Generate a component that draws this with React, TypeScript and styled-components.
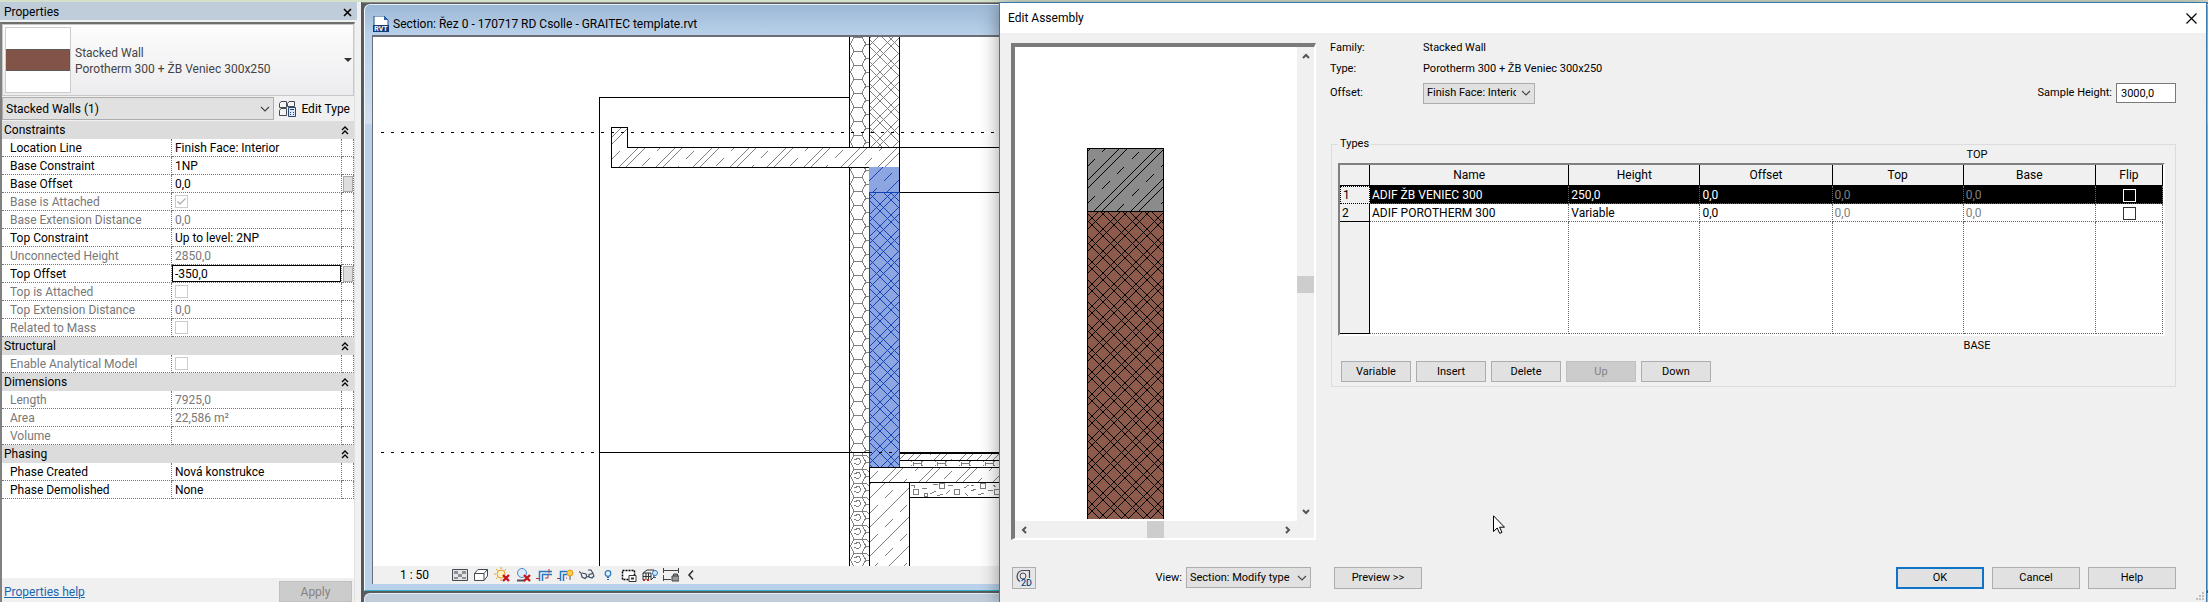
import React, { useId } from "react";
import styled, { createGlobalStyle } from "styled-components";

const Global = createGlobalStyle`
  *, *::before, *::after { box-sizing: border-box; }
  html, body { margin: 0; padding: 0; }
  body { font: 12px/18px Roboto, "Liberation Sans", sans-serif; color: #000; background: #f0f0f0; }
  button, input, select { font: inherit; color: inherit; margin: 0; }
  table { border-collapse: separate; border-spacing: 0; table-layout: fixed; }
  th, td { padding: 0; font-weight: 400; text-align: left; }
  svg { display: block; flex: none; }
`;

/* ---------- shared controls ---------- */

const Desktop = styled.div`
  position: relative;
  display: flex;
  min-height: 100vh;
  padding-top: 2px;
  background: #d6e1cc;
`;

const PushButton = styled.button<{ $wide?: boolean; $primary?: boolean }>`
  width: ${(p) => (p.$wide ? 88 : 70)}px;
  height: ${(p) => (p.$wide ? 22 : 21)}px;
  padding: 0;
  border: ${(p) => (p.$primary ? "2px solid #0f74c8" : "1px solid #adadad")};
  background: #e1e1e1;
  font-size: 11px;
  line-height: 16px;
  text-align: center;
  &:disabled { background: #cccccc; border-color: #bfbfbf; color: #838383; }
`;

const SelectBox = styled.div<{ $width?: number; $height: number; $size: number }>`
  position: relative;
  ${(p) => (p.$width ? `width: ${p.$width}px;` : "flex: 1;")}
  height: ${(p) => p.$height}px;
  font-size: ${(p) => p.$size}px;
  select {
    appearance: none;
    width: 100%;
    height: 100%;
    padding: 0 18px 0 3px;
    border: 1px solid #adadad;
    border-radius: 0;
    background: #e1e1e1;
    overflow: hidden;
  }
  svg { position: absolute; right: 4px; top: 50%; margin-top: -4px; pointer-events: none; }
`;

const Tick = styled.input`
  appearance: none;
  display: block;
  width: 13px;
  height: 13px;
  border: 1px solid #333;
  background: #fff;
  &:disabled { border-color: #cccccc; }
  &:checked {
    background: #fff url("data:image/svg+xml,%3Csvg xmlns='http://www.w3.org/2000/svg' viewBox='0 0 11 11'%3E%3Cpath d='M1.500 5.500 4 8 9.500 2.500' fill='none' stroke='%23b0b0b0' stroke-width='1.300'/%3E%3C/svg%3E");
  }
`;

const Chevron = () => (
  <svg width="10" height="8" viewBox="0 0 10 8" fill="none" stroke="#444" strokeWidth="1.1">
    <path d="M1 2 5 6 9 2" />
  </svg>
);

type Option = { id: string; label?: string; text: string; width?: number; height: number; size: number };
const Select = ({ id, label, text, width, height, size }: Option) => (
  <SelectBox $width={width} $height={height} $size={size}>
    <select id={id} aria-label={label} defaultValue={text}>
      <option>{text}</option>
    </select>
    <Chevron />
  </SelectBox>
);

/* ---------- properties palette ---------- */

const Palette = styled.aside`
  display: flex;
  flex-direction: column;
  flex: none;
  width: 361px;
  padding-right: 4px;
  background: #f0f0f0;
`;

const PaletteTitle = styled.header`
  display: flex;
  align-items: center;
  justify-content: space-between;
  height: 18px;
  padding: 2px 5px 0 4px;
  background: #bfcddb;
  h2 { margin: 0; font-size: 12px; line-height: 18px; font-weight: 400; }
`;

const IconButton = styled.button`
  display: flex;
  align-items: center;
  justify-content: center;
  padding: 0;
  border: 0;
  background: none;
`;

const PaletteBody = styled.div`
  display: flex;
  flex: 1;
  flex-direction: column;
  margin: 2px 2px 0 0;
  border-left: 2px solid #808080;
  border-top: 2px solid #6e6e6e;
  border-right: 1px solid #e0e0e0;
`;

const TypeSelector = styled.button`
  display: flex;
  align-items: center;
  gap: 4px;
  height: 72px;
  padding: 2px 1px 2px 2px;
  border: 1px solid #c8c8c8;
  background: linear-gradient(#fdfdfd, #ececef);
  text-align: left;
  color: #444;
`;

const TypeText = styled.span`
  display: flex;
  flex: 1;
  flex-direction: column;
  padding-top: 2px;
  line-height: 16px;
`;

const Thumb = styled.span`
  display: flex;
  align-items: center;
  width: 66px;
  height: 66px;
  border: 1px solid #ccc;
  background: #fff;
  &::before { content: ""; flex: 1; height: 22px; background: #825447; border: 1px solid #5c5c5c; border-left: 0; }
`;

const FilterRow = styled.div`
  display: flex;
  align-items: center;
  gap: 5px;
  height: 25px;
  padding-right: 4px;
`;

const EditType = styled.button`
  display: flex;
  align-items: center;
  gap: 5px;
  padding: 0;
  border: 0;
  background: none;
`;

const PropTable = styled.table`
  width: 100%;
  background: #fff;
  tr { height: 18px; }
  th[colspan] { background: #dcdcdc; padding-left: 2px; }
`;

const GroupHead = styled.div`
  display: flex;
  align-items: center;
  justify-content: space-between;
  height: 18px;
  padding-right: 5px;
`;

const PropRow = styled.tr<{ $muted?: boolean }>`
  color: ${(p) => (p.$muted ? "#787878" : "#000")};
  line-height: 16px;
  th, td {
    height: 18px;
    border-bottom: 1px dotted #777;
    border-right: 1px dotted #777;
    white-space: nowrap;
  }
  th { padding-left: 8px; }
  td { padding-left: 3px; }
  td:last-child { padding: 0 0 0 1px; }
`;

const ValueInput = styled.input`
  display: block;
  width: calc(100% + 3px);
  height: 17px;
  margin-left: -3px;
  padding: 0 2px;
  border: 1px solid #000;
  background: #fff;
`;

const AssocButton = styled.button`
  display: block;
  width: 10px;
  height: 16px;
  padding: 0;
  border: 1px solid #aaa;
  background: #ddd;
`;

const Filler = styled.div`
  flex: 1;
  background: #fff;
`;

const PaletteFoot = styled.footer`
  display: flex;
  align-items: flex-end;
  justify-content: space-between;
  height: 24px;
  padding: 0 2px;
  a { color: #1a66b3; line-height: 20px; }
  button { width: 73px; font-size: 12px; }
`;

type Prop = { name: string; value?: string; muted?: boolean; kind?: "tick" | "ticked" | "edit"; assoc?: boolean };
const groups: { title: string; rows: Prop[] }[] = [
  {
    title: "Constraints",
    rows: [
      { name: "Location Line", value: "Finish Face: Interior" },
      { name: "Base Constraint", value: "1NP" },
      { name: "Base Offset", value: "0,0", assoc: true },
      { name: "Base is Attached", muted: true, kind: "ticked" },
      { name: "Base Extension Distance", value: "0,0", muted: true },
      { name: "Top Constraint", value: "Up to level: 2NP" },
      { name: "Unconnected Height", value: "2850,0", muted: true },
      { name: "Top Offset", value: "-350,0", kind: "edit", assoc: true },
      { name: "Top is Attached", muted: true, kind: "tick" },
      { name: "Top Extension Distance", value: "0,0", muted: true },
      { name: "Related to Mass", muted: true, kind: "tick" },
    ],
  },
  { title: "Structural", rows: [{ name: "Enable Analytical Model", muted: true, kind: "tick" }] },
  {
    title: "Dimensions",
    rows: [
      { name: "Length", value: "7925,0", muted: true },
      { name: "Area", value: "22,586 m²", muted: true },
      { name: "Volume", value: "", muted: true },
    ],
  },
  {
    title: "Phasing",
    rows: [
      { name: "Phase Created", value: "Nová konstrukce" },
      { name: "Phase Demolished", value: "None" },
    ],
  },
];

const PropValue = ({ row }: { row: Prop }) => {
  if (row.kind === "edit") return <ValueInput aria-label={row.name} defaultValue={row.value} />;
  if (row.kind) return <Tick type="checkbox" aria-label={row.name} disabled defaultChecked={row.kind === "ticked"} />;
  return <>{row.value}</>;
};

const Properties = () => (
  <Palette>
    <PaletteTitle>
      <h2>Properties</h2>
      <IconButton aria-label="Close palette">
        <svg width="9" height="9" viewBox="0 0 9 9" stroke="#000" strokeWidth="1.6">
          <path d="M1 1 8 8M8 1 1 8" />
        </svg>
      </IconButton>
    </PaletteTitle>
    <PaletteBody>
      <TypeSelector>
        <Thumb />
        <TypeText>
          <span>Stacked Wall</span>
          <span>Porotherm 300 + ŽB Veniec 300x250</span>
        </TypeText>
        <svg width="8" height="4" viewBox="0 0 8 4">
          <path d="M0 0H8L4 4Z" fill="#333" />
        </svg>
      </TypeSelector>
      <FilterRow>
        <Select id="filter" label="Selection filter" text="Stacked Walls (1)" height={23} size={12} />
        <EditType>
          <svg width="17" height="17" viewBox="0 0 17 17" fill="#f4f4f4" stroke="#454b57">
            <path d="M2 1.500H7.500V7.500H.5V3.500ZM10 1.500H15.500V6.500H8.500V3.500ZM2 8.500H7.500V15.500H.5V10.500Z" />
            <path d="M9.500 7.500H16.500V16.500H9.500Z" fill="#dfe9f5" stroke="#27456f" />
            <path d="M11 9.500H15M11 12.500H12M14 12.500H15M11 14.500H12M14 14.500H15" stroke="#27456f" />
          </svg>
          Edit Type
        </EditType>
      </FilterRow>
      <PropTable>
        <colgroup>
          <col />
          <col width="170" />
          <col width="12" />
        </colgroup>
        {groups.map((g) => (
          <tbody key={g.title}>
            <tr>
              <th colSpan={3} scope="rowgroup">
                <GroupHead>
                  {g.title}
                  <svg width="8" height="9" viewBox="0 0 8 9" fill="none" stroke="#000" strokeWidth="1.3">
                    <path d="M1 4 4 1 7 4M1 8 4 5 7 8" />
                  </svg>
                </GroupHead>
              </th>
            </tr>
            {g.rows.map((r) => (
              <PropRow key={r.name} $muted={r.muted}>
                <th scope="row">{r.name}</th>
                <td>
                  <PropValue row={r} />
                </td>
                <td>{r.assoc && <AssocButton aria-label={`Associate ${r.name}`} />}</td>
              </PropRow>
            ))}
          </tbody>
        ))}
      </PropTable>
      <Filler />
      <PaletteFoot>
        <a href="#help">Properties help</a>
        <PushButton disabled>Apply</PushButton>
      </PaletteFoot>
    </PaletteBody>
  </Palette>
);

/* ---------- hatches ---------- */

type Area = { x: number; y: number; w: number; h: number };

const rising = ({ x, y, w, h }: Area, phase: number, step: number) => {
  let d = "";
  for (let s = phase - Math.ceil((phase - x - y) / step) * step; s < x + y + w + h; s += step)
    d += `M${x} ${s - x}L${x + w} ${s - x - w}`;
  return d;
};

const falling = ({ x, y, w, h }: Area, phase: number, step: number) => {
  let d = "";
  for (let s = phase - Math.ceil((phase - (y - x - w)) / step) * step; s < y + h - x; s += step)
    d += `M${x} ${x + s}L${x + w} ${x + w + s}`;
  return d;
};

type HatchProps = { area: Area; color: string; fill?: string; phase: number; step: number; gap: number };

const Clip = ({ id, area }: { id: string; area: Area }) => (
  <clipPath id={id}>
    <rect x={area.x} y={area.y} width={area.w} height={area.h} />
  </clipPath>
);

const Concrete = ({ area, color, fill = "none", phase, step, gap }: HatchProps) => {
  const id = useId();
  return (
    <g fill="none" stroke={color}>
      <Clip id={id} area={area} />
      <rect x={area.x} y={area.y} width={area.w} height={area.h} fill={fill} stroke="none" />
      <g clipPath={`url(#${id})`}>
        <path d={rising(area, phase, step)} />
        {gap > 0 && <path d={rising(area, phase + gap, step)} />}
        <path d={rising(area, phase + Math.round((step + gap) / 2), step)} strokeDasharray="11 10" />
      </g>
    </g>
  );
};

const Masonry = ({ area, color, fill = "none", phase, step, gap }: HatchProps) => {
  const id = useId();
  return (
    <g fill="none" stroke={color}>
      <Clip id={id} area={area} />
      <rect x={area.x} y={area.y} width={area.w} height={area.h} fill={fill} stroke="none" />
      <g clipPath={`url(#${id})`}>
        <path d={rising(area, phase, step) + rising(area, phase + gap, step)} />
        <path d={falling(area, phase, step) + falling(area, phase + gap, step)} />
      </g>
    </g>
  );
};

/* ---------- section view ---------- */

const Workspace = styled.main`
  display: flex;
  flex: 1;
  flex-direction: column;
  min-width: 0;
  padding: 1px 0 0 1px;
  border-top: 1px solid #8a8a82;
  border-left: 2px solid #55575a;
  background: #5a5d60;
`;

const ViewWindow = styled.section`
  display: flex;
  flex: 1;
  flex-direction: column;
  padding: 0 1px 6px 7px;
  border-top: 1px solid #e8f1fa;
  border-left: 1px solid #f2f7fc;
  border-bottom: 1px solid #35b5c5;
  border-top-left-radius: 6px;
  background: linear-gradient(#9db8d6, #b9d1ea 30px, #cfdff0 118px, #b9d1ea 120px);
`;

const ViewTitle = styled.header`
  display: flex;
  align-items: center;
  gap: 4px;
  height: 30px;
  padding: 8px 0 0 1px;
  h1 { margin: 0; font-size: 12px; line-height: 18px; font-weight: 400; white-space: nowrap; }
`;

const Canvas = styled.div`
  flex: 1;
  overflow: hidden;
  border-top: 2px solid #6b6f75;
  border-left: 1px solid #6b6f75;
  background: #fff;
`;

const ViewBar = styled.div`
  display: flex;
  align-items: center;
  height: 18px;
  padding-left: 27px;
  border-left: 1px solid #6b6f75;
  background: #f0f0f0;
`;

const Scale = styled.button`
  width: 52px;
  padding: 0;
  border: 0;
  background: none;
  text-align: left;
  font-size: 12px;
  line-height: 18px;
`;

const ViewTools = styled.div`
  display: flex;
  align-items: center;
  gap: 5px;
`;

const NextWindow = styled.div`
  height: 9px;
  margin-top: 2px;
  border-top: 1px solid #e4edf6;
  border-left: 1px solid #e4edf6;
  border-top-left-radius: 6px;
  background: #c0cedc;
`;

const BLACK = "#000";
const GREY = "#808080";
const BLUE = "#1443b4";
const BLUE_FILL = "#8da5e0";

const SectionDrawing = () => {
  const id = useId();
  return (
    <svg width="640" height="529" viewBox="373 37 640 529" shapeRendering="crispEdges" fill="none" stroke={BLACK} role="img" aria-label="Wall section">
      <defs>
        <pattern id={`${id}h`} x="850" y="51" width="20" height="14" patternUnits="userSpaceOnUse">
          <path d="M4 .5H12L16 7 12 13.500M4 .5 .5 7 4 13.500M16 7.500H20" stroke={GREY} fill="none" />
        </pattern>
        <pattern id={`${id}g`} x="850" y="455" width="20" height="14" patternUnits="userSpaceOnUse">
          <path d="M4 .5H12L16 7 12 13.500M4 .5 .5 7 4 13.500M16 7.500H20M4 5 9 3 11 7 8 10 4 8M12 1 16 0 19 3" stroke={GREY} fill="none" />
        </pattern>
        <pattern id={`${id}b`} x="912" y="460" width="24" height="7" patternUnits="userSpaceOnUse">
          <path d="M1 1.500V5.500M1 3.500H9V1.500M9 3.500V5.500M9 1.500H11M9 5.500H11M23 1.500H24M23 5.500H24" stroke={GREY} fill="none" />
        </pattern>
      </defs>
      <rect x="850" y="37" width="19" height="110" fill={`url(#${id}h)`} stroke="none" />
      <rect x="850" y="168" width="19" height="285" fill={`url(#${id}h)`} stroke="none" />
      <rect x="850" y="453" width="19" height="113" fill={`url(#${id}g)`} stroke="none" />
      <Masonry area={{ x: 870, y: 37, w: 29, h: 110 }} color={GREY} phase={6} step={22} gap={7} />
      <Concrete area={{ x: 612, y: 127, w: 15, h: 40 }} color={GREY} phase={786} step={37} gap={7} />
      <Concrete area={{ x: 627, y: 148, w: 272, h: 19 }} color={GREY} phase={786} step={37} gap={7} />
      <Concrete area={{ x: 869, y: 167, w: 31, h: 25 }} color={BLUE} fill={BLUE_FILL} phase={1079} step={29} gap={0} />
      <Masonry area={{ x: 869, y: 192, w: 31, h: 276 }} color={BLUE} fill={BLUE_FILL} phase={6} step={22} gap={7} />
      <path d="M869.500 192.500V467.500H899.500V168M869.500 192.500H899.500" stroke={BLUE} />
      <Concrete area={{ x: 900, y: 454, w: 113, h: 6 }} color={GREY} phase={1368} step={26} gap={7} />
      <rect x="909" y="461" width="104" height="6" fill={`url(#${id}b)`} stroke="none" />
      <Concrete area={{ x: 870, y: 468, w: 143, h: 14 }} color={GREY} phase={1401} step={37} gap={7} />
      <Concrete area={{ x: 870, y: 483, w: 39, h: 83 }} color={GREY} phase={1397} step={29} gap={0} />
      <g stroke={GREY}>
        <circle cx="916" cy="492" r="3" />
        <circle cx="942" cy="486" r="3" />
        <circle cx="957" cy="492" r="3" />
        <circle cx="983" cy="486" r="3" />
        <circle cx="997" cy="492" r="3" />
        <path d="M911 485h3v3M922 489l5-1M933 484l5 1M924 493h3v3h-3ZM930 494l6-3M937 496l6-2M948 486l5-1M950 490l-4 4M964 488l5-3M971 485l3 1M965 493l3 3M971 491l5-2M978 495l6-2M988 491l5-1M993 485l3 2" />
      </g>
      <path d="M599.500 566V97.500H849M849.500 37V147M869.500 37V147M899.500 37V192M849.500 168V566M869.500 467V566M909.500 482V566" />
      <path d="M611.500 167.500V127.500H627.500V147.500H1013M611 167.500H869M900 192.500H1013" />
      <path d="M599 452.500H869M900 452.500H1013M900 453.500H1013M900 460.500H1013M869 467.500H1013M869 482.500H1013M909 497.500H1013" />
      <path d="M381 132.500H1013M381 452.500H600M869 452.500H899" strokeDasharray="3 7" />
    </svg>
  );
};

type ToolIcon = { name: string; width?: number; art: React.ReactNode };

const RedCross = ({ x }: { x: number }) => (
  <path d={`M${x} 8l6 6M${x + 6} 8l-6 6`} stroke="#c4161c" strokeWidth="2.4" />
);
const Bulb = () => (
  <>
    <circle cx="13" cy="6" r="3" fill="#ffc94a" stroke="#e39a18" />
    <path d="M12 10H14M12 12H14" stroke="#555" />
  </>
);

const tools: ToolIcon[] = [
  {
    name: "Detail level",
    art: (
      <>
        <path d="M.5 2.500H15.500V13.500H.5Z" fill="#e6e6e6" stroke="#444a55" />
        <path d="M2 4H6V7H2ZM10 4H14V7H10ZM6 7H10V10H6ZM2 10H6V12H2ZM10 10H14V12H10Z" fill="#8b8f96" />
      </>
    ),
  },
  {
    name: "Visual style",
    art: <path d="M1.500 6.500 5 2.500H14.500V9L11 13.500H1.500ZM1.500 6.500H11V13.500M11 6.500 14.500 2.500" fill="#fff" stroke="#444a55" />,
  },
  {
    name: "Sun path",
    art: (
      <>
        <circle cx="7" cy="7" r="4" fill="#fff1c0" stroke="#e3a11e" />
        <path d="M7 0V2M7 12V14M0 7H2M2 2 3.500 3.500M12 2 10.500 3.500M2 12 3.500 10.500" stroke="#e3a11e" />
        <RedCross x={9} />
      </>
    ),
  },
  {
    name: "Shadows",
    art: (
      <>
        <path d="M2 13.500H10" stroke="#555" strokeWidth="2" />
        <circle cx="7" cy="6" r="4.500" fill="#dcebfa" stroke="#4a8ccb" />
        <RedCross x={9} />
      </>
    ),
  },
  {
    name: "Crop view",
    art: (
      <>
        <path d="M3.500 14V4.500H16M6.500 14V7.500H16" fill="none" stroke="#2a78c2" strokeWidth="1.500" />
        <path d="M9 11H12V8M0 11.500H3M13 2V6" fill="none" stroke="#b33" />
      </>
    ),
  },
  {
    name: "Show crop region",
    width: 17,
    art: (
      <>
        <path d="M3.500 14V4.500H10M6.500 14V7.500H10" fill="none" stroke="#2a78c2" strokeWidth="1.500" />
        <path d="M0 11.500H3M9 11H10" stroke="#b33" />
        <Bulb />
      </>
    ),
  },
  {
    name: "Temporary hide",
    art: (
      <path d="M0 4.500 2 6 3 10 6 11.500 8 9.500 7 7 3 6M8 9.500 10 10 13 11 15 9 14 6.500 10 7.500 10 10M14 6.500 12 3 9 3" fill="#e9eef4" stroke="#3d4a5c" strokeWidth="1.100" />
    ),
  },
  {
    name: "Reveal hidden elements",
    art: (
      <>
        <circle cx="8" cy="6.500" r="2.800" fill="#e4f1fd" stroke="#2a78c2" strokeWidth="1.200" />
        <path d="M7 10.500H9M7 12.500H9" stroke="#2a5f9a" />
      </>
    ),
  },
  {
    name: "Temporary view properties",
    art: (
      <>
        <path d="M1.500 3.500H13.500V12.500H1.500Z" fill="#fff" stroke="#000" strokeDasharray="2 1" strokeWidth="1.500" />
        <path d="M8 8.500H15V14.500H8Z" fill="#fff" stroke="#333" />
        <path d="M10 11.500H13" stroke="#333" strokeWidth="2" />
      </>
    ),
  },
  {
    name: "Analytical model",
    art: (
      <>
        <path d="M1 6 5 3H12V10L9 13M1 6V13M4 6V13M1 6H9V13M6.500 6V13M1 9.500H9" fill="none" stroke="#333" />
        <path d="M1 13H3M5 13H7" stroke="#c22" strokeWidth="2" />
        <circle cx="13" cy="6" r="2.500" fill="#d7eafc" stroke="#2a78c2" />
        <path d="M12 10.500H14" stroke="#2a5f9a" />
      </>
    ),
  },
  {
    name: "Reveal constraints",
    art: (
      <>
        <path d="M.5 1V6M15.500 1V6M.5 3.500H15.500M.5 8V14M1 12.500H8" fill="none" stroke="#444" />
        <path d="M9 9H16V14H9ZM10.500 9V7H14.500V9" fill="#999" stroke="#444" />
      </>
    ),
  },
  { name: "Less", art: <path d="M9 3.500 5 8 9 12.500" fill="none" stroke="#333" strokeWidth="1.600" /> },
];

const SectionView = () => (
  <Workspace>
    <ViewWindow>
      <ViewTitle>
        <svg width="16" height="16" viewBox="0 0 16 16">
          <path d="M1 0H11L15 4V15H1Z" fill="#fff" stroke="#1d4d8c" />
          <path d="M11 0V4H15Z" fill="#2a65ad" />
          <path d="M0 9H16V16H0Z" fill="#123c78" />
          <text x="8" y="15" textAnchor="middle" fontSize="7" fontWeight="700" fill="#fff" fontFamily="Roboto, sans-serif">RVT</text>
        </svg>
        <h1>Section: Řez 0 - 170717 RD Csolle - GRAITEC template.rvt</h1>
      </ViewTitle>
      <Canvas>
        <SectionDrawing />
      </Canvas>
      <ViewBar>
        <Scale>1 : 50</Scale>
        <ViewTools>
          {tools.map((t) => (
            <IconButton key={t.name} aria-label={t.name}>
              <svg width={t.width ?? 16} height="16" viewBox={`0 0 ${t.width ?? 16} 16`}>
                {t.art}
              </svg>
            </IconButton>
          ))}
        </ViewTools>
      </ViewBar>
    </ViewWindow>
    <NextWindow />
  </Workspace>
);

/* ---------- edit assembly dialog ---------- */

const Dialog = styled.section`
  position: absolute;
  inset: 2px 1px 0 999px;
  display: flex;
  flex-direction: column;
  border: 1px solid #3a7ab0;
  border-bottom: 0;
  background: #f0f0f0;
  box-shadow: 0 2px 18px rgba(0, 0, 0, 0.4);
  font-size: 11px;
  line-height: 16px;
`;

const DialogTitle = styled.header`
  display: flex;
  align-items: center;
  justify-content: space-between;
  height: 30px;
  padding: 0 9px 0 8px;
  background: #fff;
  h2 { margin: 0; font-size: 12px; line-height: 18px; font-weight: 400; }
`;

const Columns = styled.div`
  display: grid;
  grid-template-columns: 305px minmax(0, 1fr);
  column-gap: 14px;
  padding: 0 30px 0 11px;
`;

const DialogBody = styled(Columns)`
  flex: 1;
  padding-top: 7px;
`;

const Preview = styled.div`
  display: grid;
  grid-template: minmax(0, 1fr) 17px / minmax(0, 1fr) 17px;
  margin-top: 3px;
  border: solid;
  border-width: 4px 2px 2px 4px;
  border-color: #7a7a7a #fff #fff #7a7a7a;
  background: #f0f0f0;
`;

const PreviewCanvas = styled.div`
  overflow: hidden;
  background: #fff;
`;

const ScrollBar = styled.div<{ $vertical?: boolean }>`
  display: flex;
  flex-direction: ${(p) => (p.$vertical ? "column" : "row")};
  align-items: center;
  justify-content: space-between;
  padding: ${(p) => (p.$vertical ? "5px 0" : "0 5px")};
`;

const ScrollThumb = styled.div`
  width: 17px;
  height: 17px;
  background: #cdcdcd;
`;

const Spacer = styled.div<{ $grow: number }>`
  flex: ${(p) => p.$grow};
`;

const Fields = styled.div`
  display: grid;
  grid-template-columns: 93px minmax(0, 1fr) auto;
  grid-template-rows: 16px 26px 22px;
  align-items: center;
  margin-bottom: 35px;
`;

const Wide = styled.span`
  grid-column: span 2;
`;

const SampleHeight = styled.div`
  display: flex;
  align-items: center;
  gap: 4px;
  input { width: 60px; height: 20px; padding: 0 4px; border: 1px solid #7a7a7a; background: #fff; }
`;

const TypesGroup = styled.fieldset`
  margin: 0 0 0 1px;
  padding: 0 10px 4px 6px;
  border: 1px solid #dcdcdc;
  min-width: 0;
  legend { padding: 0 2px; line-height: 10px; }
`;

const SideLabel = styled.div`
  width: 50px;
  margin: 0 163px 0 auto;
  line-height: 12px;
  text-align: center;
`;

const TypeTable = styled.table`
  width: 100%;
  margin: 2px 0 4px;
  border: solid;
  border-width: 2px;
  border-color: #808080 #fff #fff #808080;
  background: #fff;
  font-size: 12px;
  thead th {
    height: 21px;
    border-right: 1px solid #000;
    border-bottom: 1px solid #000;
    background: #f0f0f0;
    text-align: center;
  }
  tbody th {
    padding-left: 2px;
    border-right: 1px solid #000;
    border-bottom: 1px solid #000;
    background: #f0f0f0;
  }
  td {
    height: 18px;
    padding-left: 2px;
    border-right: 1px dotted #666;
    border-bottom: 1px dotted #666;
    line-height: 16px;
  }
  td input { margin: 1px auto 0; }
`;

const TypeRow = styled.tr<{ $selected?: boolean }>`
  ${(p) =>
    p.$selected &&
    `
    th { border: 1px dotted #000 !important; padding-left: 1px; }
    td { background: #000; color: #fff; }
    td input { background: #000; border-color: #fff; }
  `}
`;

const Dim = styled.span`
  color: #808080;
`;

const EmptyRow = styled.tr`
  td { height: 112px; }
`;

const ButtonRow = styled.div<{ $gap: number }>`
  display: flex;
  align-items: center;
  gap: ${(p) => p.$gap}px;
`;

const TypeButtons = styled(ButtonRow)`
  margin-top: 9px;
  padding-left: 3px;
`;

const DialogFoot = styled(Columns)`
  align-items: center;
  height: 62px;
  padding-top: 26px;
  padding-bottom: 13px;
`;

const FootGroup = styled.div`
  display: flex;
  align-items: center;
  justify-content: space-between;
`;

const ViewField = styled.div`
  display: flex;
  align-items: center;
  gap: 4px;
  margin-right: 5px;
`;

const FootRight = styled(FootGroup)`
  padding-left: 4px;
`;

const WheelButton = styled.button`
  display: flex;
  align-items: center;
  justify-content: center;
  width: 24px;
  height: 22px;
  padding: 0;
  margin-left: 1px;
  border: 1px solid #adadad;
  background: #e6e6e6;
`;

const Overlay = styled.div`
  position: absolute;
  left: 1493px;
  top: 515px;
`;

const Grip = styled.div`
  position: absolute;
  right: 2px;
  bottom: 1px;
`;

const Arrow = ({ d }: { d: string }) => (
  <svg width="8" height="8" viewBox="0 0 8 8" fill="none" stroke="#555" strokeWidth="2">
    <path d={d} />
  </svg>
);

const PreviewDrawing = () => (
  <svg width="282" height="472" viewBox="0 0 282 472" shapeRendering="crispEdges" role="img" aria-label="Assembly preview">
    <Concrete area={{ x: 72, y: 101, w: 77, h: 63 }} color="#000" fill="#8b8b8b" phase={206} step={37} gap={8} />
    <Masonry area={{ x: 72, y: 164, w: 77, h: 308 }} color="#000" fill="#8c5b4b" phase={6} step={22} gap={7} />
    <path d="M72.500 472V101.500H148.500V472M72 164.500H149" fill="none" stroke="#000" />
  </svg>
);

const typeRows = [
  { n: 1, name: "ADIF ŽB VENIEC 300", height: "250,0" },
  { n: 2, name: "ADIF POROTHERM 300", height: "Variable" },
];

const EditAssembly = () => (
  <Dialog role="dialog" aria-label="Edit Assembly">
    <DialogTitle>
      <h2>Edit Assembly</h2>
      <IconButton aria-label="Close">
        <svg width="11" height="11" viewBox="0 0 11 11" stroke="#000" strokeWidth="1.2">
          <path d="M.5 .5 10.500 10.500M10.500 .5 .5 10.500" />
        </svg>
      </IconButton>
    </DialogTitle>
    <DialogBody>
      <Preview>
        <PreviewCanvas>
          <PreviewDrawing />
        </PreviewCanvas>
        <ScrollBar $vertical>
          <Arrow d="M1 6 4 3 7 6" />
          <ScrollThumb />
          <Arrow d="M1 2 4 5 7 2" />
        </ScrollBar>
        <ScrollBar>
          <Arrow d="M6 1 3 4 6 7" />
          <Spacer $grow={119} />
          <ScrollThumb />
          <Spacer $grow={121} />
          <Arrow d="M2 1 5 4 2 7" />
        </ScrollBar>
      </Preview>
      <div>
        <Fields>
          <span>Family:</span>
          <Wide>Stacked Wall</Wide>
          <span>Type:</span>
          <Wide>Porotherm 300 + ŽB Veniec 300x250</Wide>
          <label htmlFor="offset">Offset:</label>
          <Select id="offset" text="Finish Face: Interior" width={112} height={21} size={11} />
          <SampleHeight>
            <label htmlFor="sample">Sample Height:</label>
            <input id="sample" defaultValue="3000,0" />
          </SampleHeight>
        </Fields>
        <TypesGroup>
          <legend>Types</legend>
          <SideLabel>TOP</SideLabel>
          <TypeTable>
            <colgroup>
              <col width="30" />
              <col width="199" />
              <col width="131" />
              <col width="132" />
              <col width="131" />
              <col width="132" />
              <col width="67" />
            </colgroup>
            <thead>
              <tr>
                <th aria-label="Row" />
                {["Name", "Height", "Offset", "Top", "Base", "Flip"].map((h) => (
                  <th key={h} scope="col">
                    {h}
                  </th>
                ))}
              </tr>
            </thead>
            <tbody>
              {typeRows.map((r) => (
                <TypeRow key={r.n} $selected={r.n === 1}>
                  <th scope="row">{r.n}</th>
                  <td>{r.name}</td>
                  <td>{r.height}</td>
                  <td>0,0</td>
                  <td>
                    <Dim>0,0</Dim>
                  </td>
                  <td>
                    <Dim>0,0</Dim>
                  </td>
                  <td>
                    <Tick type="checkbox" aria-label={`Flip ${r.name}`} />
                  </td>
                </TypeRow>
              ))}
              <EmptyRow>
                <th />
                <td />
                <td />
                <td />
                <td />
                <td />
                <td />
              </EmptyRow>
            </tbody>
          </TypeTable>
          <SideLabel>BASE</SideLabel>
          <TypeButtons $gap={5}>
            <PushButton>Variable</PushButton>
            <PushButton>Insert</PushButton>
            <PushButton>Delete</PushButton>
            <PushButton disabled>Up</PushButton>
            <PushButton>Down</PushButton>
          </TypeButtons>
        </TypesGroup>
      </div>
    </DialogBody>
    <DialogFoot>
      <FootGroup>
        <WheelButton aria-label="2D steering wheel">
          <svg width="18" height="18" viewBox="0 0 18 18" fill="none" stroke="#454b57">
            <path d="M14.500 9V1.500H7A6 6 0 0 0 5 12.500" strokeWidth="1.200" />
            <circle cx="8" cy="7" r="3" />
            <text x="6" y="17" fontSize="9" fontWeight="500" fill="#114a8c" stroke="none" fontFamily="Roboto, sans-serif">2D</text>
          </svg>
        </WheelButton>
        <ViewField>
          <label htmlFor="view">View:</label>
          <Select id="view" text="Section: Modify type" width={125} height={21} size={11} />
        </ViewField>
      </FootGroup>
      <FootRight>
        <PushButton $wide>Preview &gt;&gt;</PushButton>
        <ButtonRow $gap={8}>
          <PushButton $wide $primary>
            OK
          </PushButton>
          <PushButton $wide>Cancel</PushButton>
          <PushButton $wide>Help</PushButton>
        </ButtonRow>
      </FootRight>
    </DialogFoot>
    <Grip>
      <svg width="9" height="9" viewBox="0 0 9 9" fill="#bfbfbf" shapeRendering="crispEdges">
        <path d="M7 0h2v2h-2ZM4 3h2v2h-2ZM7 3h2v2h-2ZM1 6h2v2h-2ZM4 6h2v2h-2ZM7 6h2v2h-2Z" />
      </svg>
    </Grip>
  </Dialog>
);

export default function App() {
  return (
    <Desktop>
      <Global />
      <Properties />
      <SectionView />
      <EditAssembly />
      <Overlay>
        <svg width="12" height="19" viewBox="0 0 12 19">
          <path d="M.5 .8V16.500L4.200 13 6.700 18.400 9 17.400 6.600 12.200H11.500Z" fill="#fff" stroke="#000" />
        </svg>
      </Overlay>
    </Desktop>
  );
}
